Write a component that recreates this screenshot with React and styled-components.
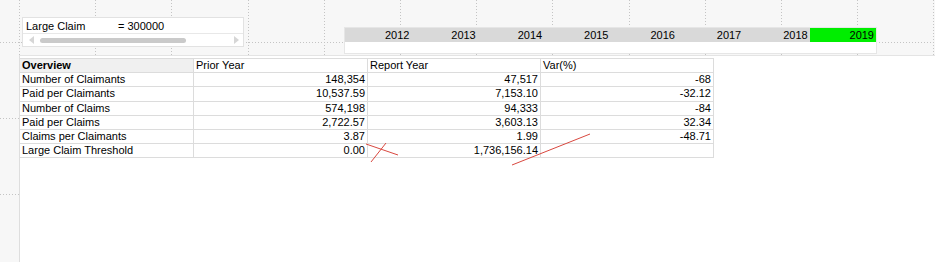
import React from 'react'
import styled, { createGlobalStyle } from 'styled-components'

const GlobalStyle = createGlobalStyle`
  html, body {
    margin: 0;
    padding: 0;
    background: #f7f7f7;
  }
  body {
    font-family: "Liberation Sans", Arial, sans-serif;
    font-size: 11px;
    color: #000;
  }
`

const years = ['2012', '2013', '2014', '2015', '2016', '2017', '2018', '2019']
const selectedYear = '2019'

const rows = [
  { label: 'Number of Claimants', prior: '148,354', report: '47,517', varPct: '-68' },
  { label: 'Paid per Claimants', prior: '10,537.59', report: '7,153.10', varPct: '-32.12' },
  { label: 'Number of Claims', prior: '574,198', report: '94,333', varPct: '-84' },
  { label: 'Paid per Claims', prior: '2,722.57', report: '3,603.13', varPct: '32.34' },
  { label: 'Claims per Claimants', prior: '3.87', report: '1.99', varPct: '-48.71' },
  { label: 'Large Claim Threshold', prior: '0.00', report: '1,736,156.14', varPct: '' },
]

// dotted design grid of the sheet canvas
const GridLines = () => {
  const xs = []
  for (let i = 0; i < 13; i++) xs.push(19 + i * 76.2)
  const ys = [42, 118, 194]
  return (
    <GridSvg width="935" height="262">
      {xs.map((x) => (
        <line key={'x' + x} x1={Math.round(x) + 0.5} y1="0" x2={Math.round(x) + 0.5} y2="262"
          stroke="#c4c4c4" strokeDasharray="1 2" />
      ))}
      {ys.map((y) => (
        <line key={'y' + y} x1="0" y1={y + 0.5} x2="935" y2={y + 0.5}
          stroke="#c4c4c4" strokeDasharray="1 2" />
      ))}
    </GridSvg>
  )
}

// hand drawn red strokes over the table
const Annotations = () => (
  <AnnotationSvg width="935" height="262">
    <g stroke="#d9483f" strokeWidth="1" fill="none">
      <line x1="366" y1="144" x2="398" y2="155" />
      <line x1="371" y1="162" x2="386" y2="143" />
      <line x1="512" y1="165" x2="590" y2="134" />
    </g>
  </AnnotationSvg>
)

export default function App() {
  return (
    <>
      <GlobalStyle />
      <Canvas>
        <GridLines />
        <TopStrip>
          <InputBox>
            <InputRow>
              <InputLabel>Large Claim</InputLabel>
              <InputValue>= 300000</InputValue>
            </InputRow>
            <ScrollRow>
              <Arrow $dir="left" />
              <ScrollTrack>
                <ScrollThumb />
              </ScrollTrack>
              <Arrow $dir="right" />
            </ScrollRow>
          </InputBox>
          <YearBox>
            <YearRow>
              {years.map((y) => (
                <YearCell key={y} $selected={y === selectedYear}>{y}</YearCell>
              ))}
            </YearRow>
            <YearBlank />
          </YearBox>
        </TopStrip>
        <Sheet>
          <Table>
            <HeadCell $first>Overview</HeadCell>
            <HeadCell>Prior Year</HeadCell>
            <HeadCell>Report Year</HeadCell>
            <HeadCell>Var(%)</HeadCell>
            {rows.map((r) => (
              <React.Fragment key={r.label}>
                <LabelCell>{r.label}</LabelCell>
                <NumCell>{r.prior}</NumCell>
                <NumCell>{r.report}</NumCell>
                <NumCell>{r.varPct}</NumCell>
              </React.Fragment>
            ))}
          </Table>
        </Sheet>
        <Annotations />
      </Canvas>
    </>
  )
}

const Canvas = styled.div`
  position: relative;
  width: 935px;
  height: 262px;
  overflow: hidden;
  background: #f7f7f7;
  display: flex;
  flex-direction: column;
`

const GridSvg = styled.svg`
  position: absolute;
  left: 0;
  top: 0;
  pointer-events: none;
`

const AnnotationSvg = styled.svg`
  position: absolute;
  left: 0;
  top: 0;
  pointer-events: none;
`

const TopStrip = styled.div`
  position: relative;
  height: 55px;
  display: flex;
  align-items: flex-start;
  padding-left: 22px;
  box-sizing: border-box;
  flex-shrink: 0;
`

const InputBox = styled.div`
  margin-top: 17px;
  width: 222px;
  background: #fff;
  border: 1px solid #e2e2e2;
  box-sizing: border-box;
`

const InputRow = styled.div`
  height: 15px;
  display: flex;
  align-items: center;
  padding-left: 3px;
  border-bottom: 1px solid #e8e8e8;
`

const InputLabel = styled.span`
  width: 92px;
`

const InputValue = styled.span``

const ScrollRow = styled.div`
  height: 12px;
  display: flex;
  align-items: center;
  padding: 0 4px 0 6px;
  gap: 4px;
`

const Arrow = styled.div`
  width: 0;
  height: 0;
  border-top: 4px solid transparent;
  border-bottom: 4px solid transparent;
  ${(p) => (p.$dir === 'left'
    ? 'border-right: 5px solid #d6d6d6;'
    : 'border-left: 5px solid #d6d6d6;')}
`

const ScrollTrack = styled.div`
  flex: 1;
  display: flex;
  align-items: center;
`

const ScrollThumb = styled.div`
  width: 146px;
  height: 5px;
  margin-left: 2px;
  border-radius: 3px;
  background: #cacaca;
`

const YearBox = styled.div`
  margin-top: 27px;
  margin-left: 100px;
  width: 533px;
  background: #fff;
  border: 1px solid #e6e6e6;
  box-sizing: border-box;
`

const YearRow = styled.div`
  display: grid;
  grid-template-columns: repeat(8, 1fr);
  height: 14px;
  background: #d9d9d9;
`

const YearCell = styled.div`
  text-align: right;
  padding-right: 2px;
  line-height: 14px;
  background: ${(p) => (p.$selected ? '#00ee00' : 'transparent')};
`

const YearBlank = styled.div`
  height: 11px;
`

const Sheet = styled.div`
  position: relative;
  flex: 1;
  margin-left: 19px;
  background: #fff;
  border-left: 1px solid #dedede;
  border-top: 1px solid #e4e4e4;
  padding-top: 2px;
`

const Table = styled.div`
  display: grid;
  grid-template-columns: 173px 174px 173px 173px;
  grid-auto-rows: 14.2px;
  width: 693px;
  border-top: 1px solid #dcdcdc;
  border-right: 1px solid #dcdcdc;
  box-sizing: content-box;
`

const Cell = styled.div`
  box-sizing: border-box;
  border-bottom: 1px solid #dcdcdc;
  border-left: 1px solid #dcdcdc;
  padding: 0 2px;
  line-height: 13.2px;
  white-space: nowrap;
  overflow: hidden;
`

const HeadCell = styled(Cell)`
  font-weight: ${(p) => (p.$first ? 700 : 400)};
  background: ${(p) => (p.$first ? '#f0f0f0' : '#fff')};
  ${(p) => p.$first && 'border-left: none;'}
`

const LabelCell = styled(Cell)`
  border-left: none;
`

const NumCell = styled(Cell)`
  text-align: right;
`
